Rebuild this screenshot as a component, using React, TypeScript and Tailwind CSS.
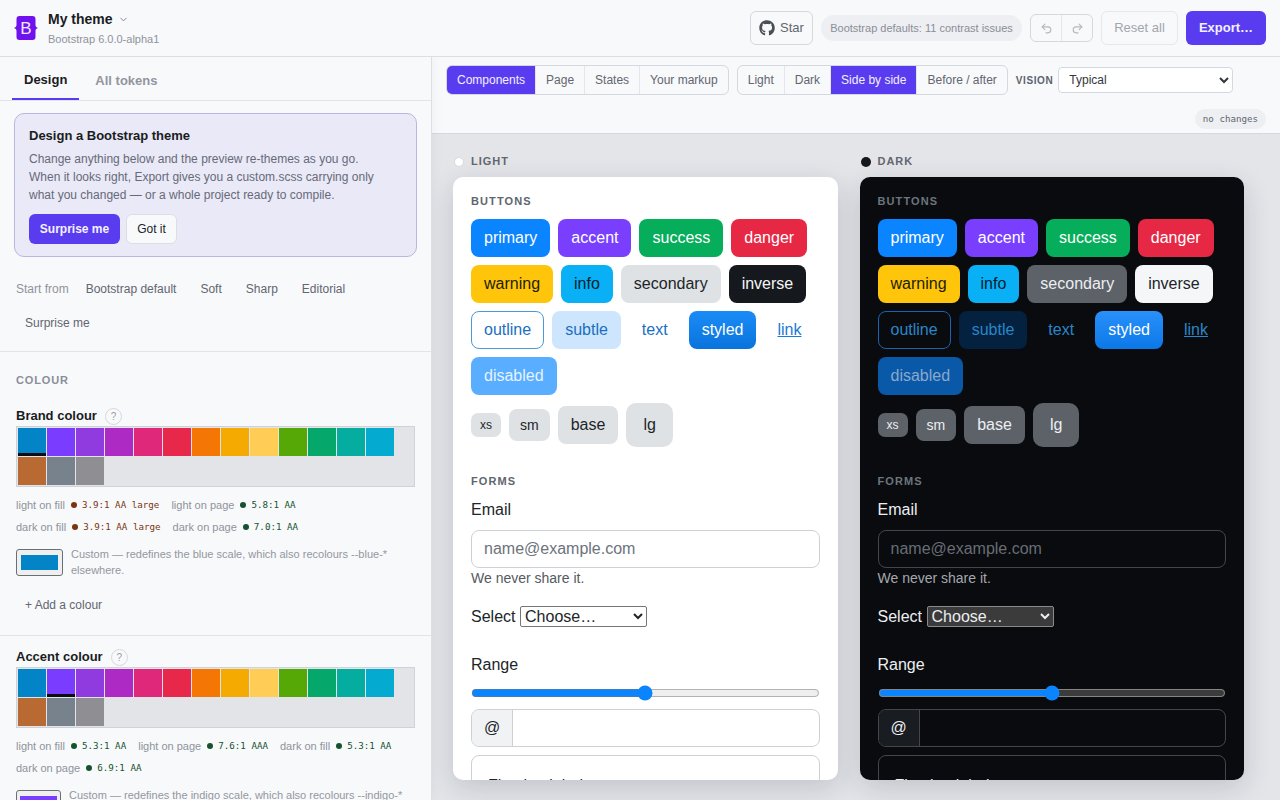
import { ChevronDown, Redo2, Undo2 } from "lucide-react";
import { FaGithub } from "react-icons/fa";

const sans = "font-['Liberation_Sans',Arial,sans-serif]";
const mono = "font-['DejaVu_Sans_Mono',monospace]";

const swatches = [
  "#0284c7", "#7a3cff", "#8f3be0", "#ad2bc4", "#e0287a", "#e8284a", "#f47706", "#f4aa00",
  "#ffcd55", "#55a805", "#05a86a", "#05ada0", "#05aad0", "#b96a33", "#78828c", "#8e8e93",
];

function Segmented({ items, active }: { items: string[]; active: string }) {
  return (
    <div className="flex h-[30px] overflow-hidden rounded-md border border-[#d5d8de] bg-[#f8f9fb]">
      {items.map((item, i) => (
        <button
          key={item}
          className={
            "px-[10px] text-xs " +
            (i > 0 ? "border-l border-[#e4e6ea] " : "") +
            (item === active ? "bg-[#5a3cf0] text-[#f3f1ff]" : "text-[#62666f]")
          }
        >
          {item}
        </button>
      ))}
    </div>
  );
}

function Contrast({ label, value, bad }: { label: string; value: string; bad?: boolean }) {
  return (
    <span className="flex items-center whitespace-nowrap">
      <span className="text-[11px] text-[#8f939c]">{label}</span>
      <span className={"ml-[6px] h-[6px] w-[6px] rounded-full " + (bad ? "bg-[#7a3410]" : "bg-[#14532d]")} />
      <span className={mono + " ml-[5px] text-[9.2px] " + (bad ? "text-[#7a3410]" : "text-[#14532d]")}>{value}</span>
    </span>
  );
}

function ColourBlock({ title, selected, help, scale, color, boxClass }: {
  title: string;
  selected: number;
  help: number;
  scale: string;
  color: string;
  boxClass: string;
}) {
  return (
    <div>
      <div className="flex h-[20px] items-center">
        <span className="text-[13px] font-bold text-[#1a1c22]">{title}</span>
        <span className="ml-[8px] mt-[1px] flex h-[17px] w-[17px] items-center justify-center rounded-full border border-[#d5d8de] text-[10px] text-[#9a9da5]">?</span>
      </div>
      <div className="flex h-[61px] flex-wrap content-start gap-px border border-[#cfd2d8] bg-[#e2e4e8] p-px">
        {swatches.map((c, i) => (
          <div key={c} className="relative h-[28px] w-[28px]" style={{ background: c }}>
            {i === selected && <div className="absolute inset-x-0 bottom-0 h-[3px] bg-[#0b0d14]" />}
          </div>
        ))}
      </div>
      <div className="mt-[10px] flex flex-wrap gap-x-[12px] gap-y-[6px] leading-[16px]">
        {help === 0 ? (
          <>
            <Contrast label="light on fill" value="3.9:1 AA large" bad />
            <Contrast label="light on page" value="5.8:1 AA" />
            <Contrast label="dark on fill" value="3.9:1 AA large" bad />
            <Contrast label="dark on page" value="7.0:1 AA" />
          </>
        ) : (
          <>
            <Contrast label="light on fill" value="5.3:1 AA" />
            <Contrast label="light on page" value="7.6:1 AAA" />
            <Contrast label="dark on fill" value="5.3:1 AA" />
            <Contrast label="dark on page" value="6.9:1 AA" />
          </>
        )}
      </div>
      <div className="mt-[11px] flex items-start gap-[8px]">
        <div className={"mt-[3px] flex h-[27px] shrink-0 items-center justify-center rounded-[3px] border border-[#6b6f76] bg-[#efefef] " + boxClass}>
          <div className="h-[15px] w-[37px]" style={{ background: color }} />
        </div>
        <p className="text-[11px] leading-[16px] text-[#93979f]">
          Custom — redefines the {scale} scale, which also recolours --{scale}-* elsewhere.
        </p>
      </div>
    </div>
  );
}

function Sidebar() {
  return (
    <aside className="relative z-10 h-[743px] w-[432px] shrink-0 overflow-hidden border-r border-[#dcdfe4] bg-[#f8f9fb] shadow-[2px_0_10px_rgba(0,0,0,0.04)]">
      <div className="flex h-[44px] border-b border-[#e2e4e9] pl-[12px]">
        <button className="h-[43px] border-b-2 border-[#5a3cf0] px-[12px] pt-[5px] text-[13px] font-bold text-[#1a1c22]">Design</button>
        <button className="ml-[4px] h-[43px] px-[12px] pt-[4px] text-[13px] font-bold text-[#92959e]">All tokens</button>
      </div>

      <div className="mx-[14px] mt-[12px] h-[144px] rounded-[10px] border border-[#b7b7df] bg-[#e9e9f7] px-[14px] pt-[13px]">
        <h2 className="text-[13px] font-bold leading-[18px] text-[#1a1c22]">Design a Bootstrap theme</h2>
        <p className="mt-[5px] text-xs leading-[18px] text-[#676a78]">
          Change anything below and the preview re-themes as you go.
          <br />
          When it looks right, Export gives you a custom.scss carrying only
          <br />
          what you changed — or a whole project ready to compile.
        </p>
        <div className="mt-[10px] flex gap-[6px]">
          <button className="h-[30px] w-[91px] rounded-md bg-[#5a3cf0] text-xs font-bold text-[#f3f1ff]">Surprise me</button>
          <button className="h-[30px] w-[51px] rounded-md border border-[#dcdee3] bg-[#f8f9fb] text-xs text-[#22242a]">Got it</button>
        </div>
      </div>

      <div className="flex flex-wrap items-center border-b border-[#e2e4e9] pb-[11px] pl-[16px] pr-[16px] pt-[15px] text-xs text-[#62666f]">
        <span className="mr-[8px] text-[#8f939c]">Start from</span>
        <button className="h-[34px] px-[9px]">Bootstrap default</button>
        <button className="ml-[6px] h-[34px] px-[9px]">Soft</button>
        <button className="ml-[6px] h-[34px] px-[9px]">Sharp</button>
        <button className="ml-[6px] h-[34px] px-[9px]">Editorial</button>
        <button className="h-[34px] px-[9px]">Surprise me</button>
      </div>

      <div className="border-b border-[#e2e4e9] px-[16px] pb-[15px] pt-[21px]">
        <div className="mb-[19px] text-[11px] font-bold leading-[14px] tracking-[0.08em] text-[#8a8e98]">COLOUR</div>
        <ColourBlock title="Brand colour" selected={0} help={0} scale="blue" color="#0284c7" boxClass="w-[47px]" />
        <button className="mt-[12px] h-[30px] px-[9px] text-xs text-[#62666f]">+ Add a colour</button>
      </div>

      <div className="px-[16px] pt-[11px]">
        <ColourBlock title="Accent colour" selected={1} help={1} scale="indigo" color="#7a3cff" boxClass="w-[45px]" />
      </div>
    </aside>
  );
}

function Btn({ label, cls, size = "h-[38px] px-[13px] rounded-lg text-base" }: { label: string; cls: string; size?: string }) {
  return <span className={"flex items-center whitespace-nowrap " + size + " " + cls}>{label}</span>;
}

function Preview({ dark }: { dark: boolean }) {
  const heading = "text-[11px] font-bold leading-[14px] tracking-[0.1em] " + (dark ? "text-[#6c757d]" : "text-[#60666e]");
  const main = dark ? "text-[#eceef1]" : "text-[#212529]";
  const secondary = dark ? "bg-[#5d6269] text-[#eceef1]" : "bg-[#dfe2e5] text-[#212529]";
  const fieldBorder = dark ? "border-[#43474d]" : "border-[#cdd0d4]";
  const link = dark ? "text-[#2a86c9]" : "text-[#1a6fc0]";

  return (
    <div className="w-[384.5px]">
      <div className="flex h-[20px] items-center gap-[7px] pl-px">
        <span className={"mt-px h-[10px] w-[10px] rounded-full " + (dark ? "bg-[#15171c]" : "border border-[#d8dade] bg-white")} />
        <span className="text-[11px] font-bold tracking-[0.09em] text-[#62666f]">{dark ? "DARK" : "LIGHT"}</span>
      </div>
      <div className={"mt-[6px] h-[603px] overflow-hidden rounded-[10px] px-[18px] pt-[17px] shadow-[0_8px_28px_rgba(20,24,40,0.16)] " + (dark ? "bg-[#090b0f]" : "bg-white")}>
        <div className={heading}>BUTTONS</div>
        <div className="mt-[11px] flex flex-wrap gap-[8px]">
          <Btn label="primary" cls="bg-[#0a84ff] text-white" />
          <Btn label="accent" cls="bg-[#7a3ffe] text-white" />
          <Btn label="success" cls="bg-[#06ad5a] text-white" />
          <Btn label="danger" cls="bg-[#e62845] text-white" />
          <Btn label="warning" cls="bg-[#ffc50a] text-[#241c02]" />
          <Btn label="info" cls="bg-[#09b0f5] text-[#04202c]" />
          <Btn label="secondary" cls={secondary} />
          <Btn label="inverse" cls={dark ? "bg-[#f5f6f8] text-[#212529]" : "bg-[#15181c] text-[#f5f6f8]"} />
          <Btn label="outline" cls={"border " + link + (dark ? " border-[#1c62b0]" : " border-[#4a9ad9]")} size="h-[38px] px-[12px] rounded-lg text-base" />
          <Btn label="subtle" cls={(dark ? "bg-[#04213f] " : "bg-[#cde6fd] ") + link} />
          <Btn label="text" cls={link} />
          <Btn label="styled" cls={"text-white " + (dark ? "bg-[linear-gradient(#2a90fa,#0b78e8)]" : "bg-[linear-gradient(#1a8cf7,#0a73dc)]")} />
          <Btn label="link" cls={"underline " + (dark ? "text-[#2a86c9]" : "text-[#1a7bd6]")} />
          <Btn label="disabled" cls={dark ? "bg-[#0a58a8] text-[#8aa9c9]" : "bg-[#5aaeff] text-[#e6f3ff]"} />
        </div>
        <div className="mt-[8px] flex items-center gap-[8px]">
          <Btn label="xs" cls={secondary} size="h-[24px] px-[9px] rounded-[7px] text-xs" />
          <Btn label="sm" cls={secondary} size="h-[32px] px-[11px] rounded-lg text-sm" />
          <Btn label="base" cls={secondary} size="h-[38px] px-[13px] rounded-lg text-base" />
          <Btn label="lg" cls={secondary} size="h-[44px] px-[17px] rounded-[10px] text-base" />
        </div>

        <div className={"mt-[27px] " + heading}>FORMS</div>
        <label className={"mt-[13px] block text-base leading-[18px] " + main}>Email</label>
        <div className={"mt-[11px] flex h-[38px] items-center rounded-lg border px-[12px] text-base " + fieldBorder + (dark ? " text-[#686d74]" : " text-[#6c737b]")}>
          name@example.com
        </div>
        <p className={"mt-px text-sm leading-[18px] " + (dark ? "text-[#a4a8ad]" : "text-[#555a60]")}>We never share it.</p>

        <div className={"mt-[19px] flex h-[21px] items-center text-base " + main}>
          Select
          <select
            className={"ml-[4.6px] h-[21px] w-[127px] appearance-auto rounded-[2px] border text-base " + (dark ? "border-[#8a8a8a] bg-[#3b3b3b] [color-scheme:dark]" : "border-[#767676] bg-white")}
          >
            <option>Choose…</option>
          </select>
        </div>

        <label className={"mt-[29px] block text-base leading-[18px] " + main}>Range</label>
        <input
          type="range"
          defaultValue={50}
          className={"mx-0 mt-[11px] block h-[16px] w-full accent-[#0a84ff] " + (dark ? "[color-scheme:dark]" : "")}
        />
        <div className={"mt-[8px] flex h-[38px] overflow-hidden rounded-lg border " + fieldBorder}>
          <span className={"flex w-[41px] items-center justify-center border-r text-base " + fieldBorder + " " + main + (dark ? " bg-[#191c20]" : " bg-[#f1f2f4]")}>@</span>
        </div>
        <div className={"mt-[8px] h-[58px] rounded-lg border px-[16px] pt-[18px] text-base " + fieldBorder + " " + main}>
          Floating label
        </div>
      </div>
    </div>
  );
}

export default function App() {
  return (
    <div className={sans + " h-[800px] w-[1280px] overflow-hidden bg-[#f8f9fb]"}>
      <header className="relative z-20 flex h-[57px] items-center border-b border-[#dcdfe4] bg-[#f8f9fb] pl-[14px] pr-[14px]">
        <svg width="24" height="24" viewBox="0 0 24 24" className="shrink-0">
          <path
            d="M5.5 0h13a3 3 0 0 1 3 3v6c0 1.6 .9 2.4 2.5 3c-1.600 .6-2.500 1.400-2.500 3v6a3 3 0 0 1-3 3h-13a3 3 0 0 1-3-3v-6c0-1.600-.9-2.400-2.500-3c1.600-.6 2.500-1.400 2.500-3V3a3 3 0 0 1 3-3z"
            fill="#7012ee"
          />
          <text x="12" y="18" textAnchor="middle" fontSize="17" fontFamily="Liberation Sans, sans-serif" fill="#f0e6ff">B</text>
        </svg>
        <div className="ml-[10px]">
          <div className="flex items-center gap-[5px] text-sm font-bold leading-[18px] text-[#1a1c22]">
            My theme <ChevronDown size={11} className="mt-px text-[#7a7e87]" />
          </div>
          <div className="mt-[4px] text-[11px] leading-[14px] text-[#8f939c]">Bootstrap 6.0.0-alpha1</div>
        </div>

        <div className="ml-auto flex items-center gap-[8px]">
          <button className="flex h-[34px] w-[63px] items-center justify-center gap-[5px] rounded-md border border-[#d5d8de] text-[13px] text-[#62666f]">
            <FaGithub size={16} className="text-[#4a4e56]" /> Star
          </button>
          <span className="flex h-[26px] w-[201px] items-center justify-center rounded-full bg-[#eeeff2] text-[11px] text-[#8a8e98]">
            Bootstrap defaults: 11 contrast issues
          </span>
          <div className="flex h-[28px] w-[63px] rounded-md border border-[#d5d8de]">
            <span className="flex flex-1 items-center justify-center border-r border-[#e4e6ea] text-[#b4b7bd]"><Undo2 size={13} /></span>
            <span className="flex flex-1 items-center justify-center text-[#b4b7bd]"><Redo2 size={13} /></span>
          </div>
          <button className="h-[34px] w-[77px] rounded-md border border-[#e6e8ec] text-[13px] text-[#a2a5ac]">Reset all</button>
          <button className="h-[34px] w-[80px] rounded-md bg-[#5a3cf0] text-[13px] font-bold text-[#f3f1ff]">Export…</button>
        </div>
      </header>

      <div className="flex">
        <Sidebar />
        <main className="w-[848px]">
          <div className="flex h-[77px] flex-wrap items-start gap-x-[8px] border-b border-[#d5d8de] bg-[#f8f9fb] px-[14px] pt-[8px]">
            <Segmented items={["Components", "Page", "States", "Your markup"]} active="Components" />
            <Segmented items={["Light", "Dark", "Side by side", "Before / after"]} active="Side by side" />
            <div className="flex h-[30px] items-center">
              <span className="text-[10px] font-bold tracking-[0.06em] text-[#5f636c]">VISION</span>
              <select className="ml-[5px] h-[26px] w-[175px] appearance-auto rounded-[4px] border border-[#d5d8de] bg-white pl-[6px] text-xs text-[#33363c]">
                <option>Typical</option>
              </select>
            </div>
            <span className={mono + " ml-auto mt-[10px] flex h-[20px] w-[71px] items-center justify-center rounded-full bg-[#eeeff2] text-[9.2px] text-[#62666f]"}>
              no changes
            </span>
          </div>
          <div className="flex h-[666px] gap-[22px] overflow-hidden bg-[#e3e5e9] pl-[21px] pt-[17px]">
            <Preview dark={false} />
            <Preview dark />
          </div>
        </main>
      </div>
    </div>
  );
}
